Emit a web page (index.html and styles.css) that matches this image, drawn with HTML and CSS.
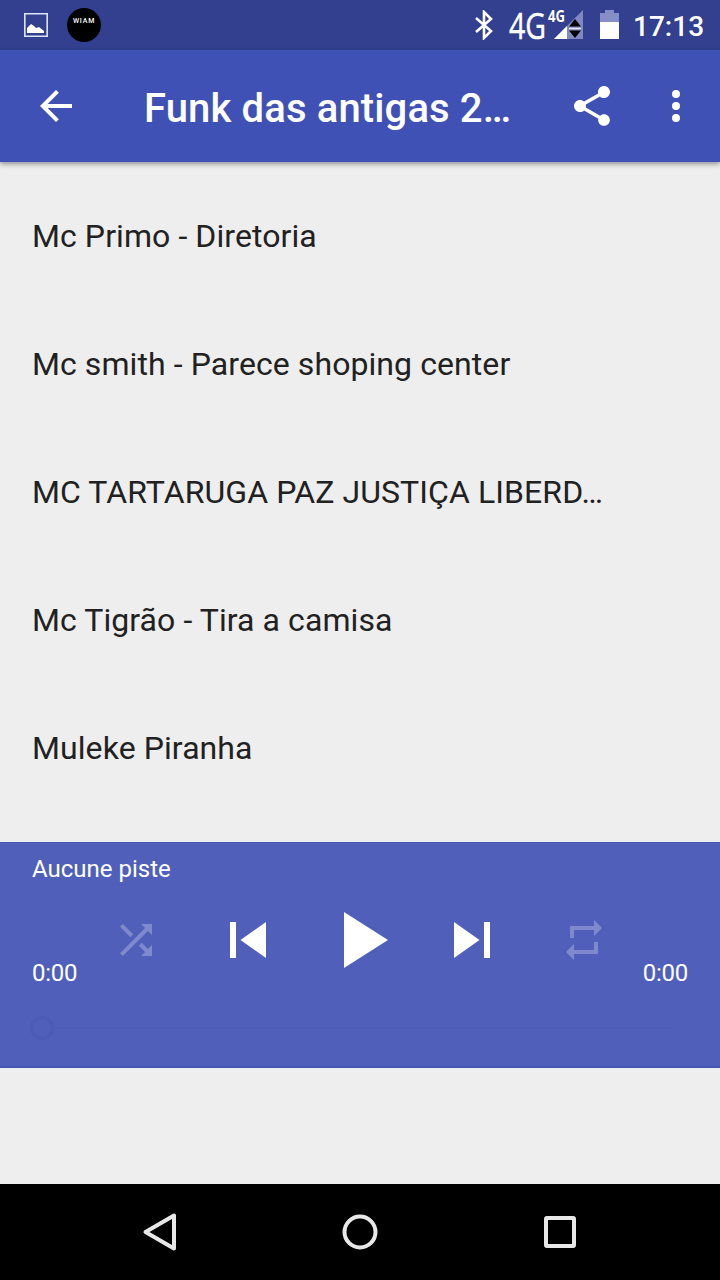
FILE: index.html
```html
<!DOCTYPE html>
<html lang="fr">
<head>
<meta charset="utf-8">
<title>Funk das antigas</title>
<link rel="stylesheet" href="styles.css">
</head>
<body>
<div class="screen">
  <div class="status">
    <svg class="photo" width="24" height="24" viewBox="0 0 24 24"><path d="M.8.8h22.4v22.4H.8z" fill="none" stroke="#dfe3fa" stroke-width="1.6"/><path d="M3 20v-5l4-4 3 2 2 2 3-1 5 4v2z" fill="#fff"/></svg>
    <div class="badge"><span>WIAM</span></div>
    <svg class="bluetooth" width="20" height="30" viewBox="0 0 20 30"><path d="M2 8l15 13-7 7V2l7 7L2 22" fill="none" stroke="#fff" stroke-width="2.6"/></svg>
    <svg class="signal" width="78" height="50" viewBox="0 0 78 50">
      <path d="M75 10v29H46z" fill="#7f88c2"/><path d="M59 26v13H46z" fill="#fff"/>
      <path d="M67 19l6 7.5H61zM67 38l6-7.5H61z" fill="#000"/><path d="M61 28.5h12" stroke="#e4e7f6" stroke-width="1.6"/>
      <text class="net-large" x="1" y="39" textLength="37" lengthAdjust="spacingAndGlyphs">4G</text>
      <text class="net-small" x="40" y="22" textLength="17" lengthAdjust="spacingAndGlyphs">4G</text>
    </svg>
    <svg class="battery" width="19" height="30" viewBox="0 0 19 30"><path d="M0 3h5V0h9v3h5v9H0z" fill="#858ec6"/><path d="M0 12h19v17H0z" fill="#fff"/></svg>
    <span class="clock">17:13</span>
  </div>
  <header class="toolbar">
    <svg width="48" height="48" viewBox="0 0 24 24"><path d="M20 11H7.83l5.59-5.59L12 4l-8 8 8 8 1.41-1.41L7.83 13H20z"/></svg>
    <h1>Funk das antigas 2…</h1>
    <svg width="48" height="48" viewBox="0 0 24 24"><path d="M18 16.08c-.76 0-1.44.3-1.96.77L8.91 12.7c.05-.23.09-.46.09-.7s-.04-.47-.09-.7l7.05-4.11c.54.5 1.25.81 2.04.81 1.66 0 3-1.34 3-3s-1.34-3-3-3-3 1.34-3 3c0 .24.04.47.09.7L8.04 9.81C7.5 9.31 6.79 9 6 9c-1.66 0-3 1.34-3 3s1.34 3 3 3c.79 0 1.5-.31 2.04-.81l7.12 4.16c-.05.21-.08.43-.08.65 0 1.61 1.31 2.92 2.92 2.92s2.92-1.31 2.92-2.92-1.31-2.92-2.92-2.92z"/></svg>
    <svg class="more" width="48" height="48" viewBox="0 0 24 24"><circle cx="12" cy="6" r="2"/><circle cx="12" cy="12" r="2"/><circle cx="12" cy="18" r="2"/></svg>
  </header>
  <ul class="tracks">
    <li>Mc Primo - Diretoria</li>
    <li>Mc smith - Parece shoping center</li>
    <li>MC TARTARUGA PAZ JUSTIÇA LIBERD…</li>
    <li>Mc Tigrão - Tira a camisa</li>
    <li>Muleke Piranha</li>
  </ul>
  <section class="player">
    <div class="now">Aucune piste</div>
    <div class="controls">
      <span class="time">0:00</span>
      <div class="buttons">
        <svg class="off" width="48" height="48" viewBox="0 0 24 24"><path d="M10.59 9.17L5.41 4 4 5.41l5.17 5.17 1.42-1.41zM14.5 4l2.04 2.04L4 18.59 5.41 20 17.96 7.46 20 9.5V4h-5.5zm.33 9.41l-1.41 1.41 3.13 3.13L14.5 20H20v-5.5l-2.04 2.04-3.13-3.13z"/></svg>
        <svg width="72" height="72" viewBox="0 0 24 24"><path d="M6 6h2v12H6zm3.5 6l8.5 6V6z"/></svg>
        <svg width="96" height="96" viewBox="0 0 24 24"><path d="M8 5v14l11-7z"/></svg>
        <svg width="72" height="72" viewBox="0 0 24 24"><path d="M6 18l8.5-6L6 6v12zM16 6v12h2V6h-2z"/></svg>
        <svg class="off" width="48" height="48" viewBox="0 0 24 24"><path d="M7 7h10v3l4-4-4-4v3H5v6h2V7zm10 10H7v-3l-4 4 4 4v-3h12v-6h-2v4z"/></svg>
      </div>
      <span class="time end">0:00</span>
    </div>
    <div class="seek"><span class="thumb"></span><span class="rail"></span></div>
  </section>
  <nav class="navbar">
    <svg width="40" height="40" viewBox="0 0 40 40"><path d="M5.5 20L34 3.5v33z"/></svg>
    <svg width="40" height="40" viewBox="0 0 40 40"><circle cx="20" cy="20" r="15.5"/></svg>
    <svg width="40" height="40" viewBox="0 0 40 40"><rect x="6" y="6" width="28" height="28" rx="1"/></svg>
  </nav>
</div>
</body>
</html>
```
FILE: styles.css
```css
* { box-sizing: border-box; }
body { margin: 0; font-family: Roboto, sans-serif; }
svg { display: block; flex: none; }
.screen { width: 720px; height: 1280px; display: flex; flex-direction: column; background: #eee; overflow: hidden; }

.status { height: 50px; flex: none; display: flex; align-items: center; padding: 0 17px 0 24px; background: #32408f; color: #fff; }
.badge { width: 34px; height: 34px; margin-left: 19px; border-radius: 50%; background: #000; display: flex; justify-content: center; padding-top: 7px; }
.badge span { font-size: 7px; line-height: 12px; font-weight: 500; letter-spacing: 0.8px; }
.bluetooth { margin-left: auto; }
.signal { margin-left: 14px; }
.net-large { font: 37px "Open Sans", sans-serif; fill: #fff; stroke: #fff; stroke-width: .5; }
.net-small { font: 700 16px "Open Sans", sans-serif; fill: #fff; }
.battery { margin-left: 14px; }
.clock { width: 70px; margin-left: 14px; font-size: 28px; line-height: 46px; font-weight: 500; padding-top: 3px; white-space: nowrap; }

.toolbar { height: 112px; flex: none; display: flex; align-items: center; padding: 0 20px 0 32px; background: #3f51b5; box-shadow: 0 2px 5px rgba(0, 0, 0, .4); position: relative; }
.toolbar svg { fill: #fff; }
.toolbar h1 { flex: 1; margin: 0; padding: 6px 0 0 64px; font-size: 40px; line-height: 48px; font-weight: 500; letter-spacing: .13px; color: #fff; white-space: nowrap; }
.more { margin-left: 36px; }

.tracks { height: 680px; flex: none; margin: 0; padding: 10px 0 0; list-style: none; overflow: hidden; }
.tracks li { height: 128px; padding-left: 32px; font-size: 32px; line-height: 128px; letter-spacing: .08px; color: #212121; white-space: nowrap; }

.player { height: 226px; flex: none; background: #5060ba; border-top: 1px solid #4655b3; border-bottom: 2px solid #4655b3; color: #fff; font-size: 24px; line-height: 28px; }
.now { height: 49px; padding: 12px 32px 0; }
.controls { height: 96px; display: flex; padding: 0 32px; }
.time { width: 48px; padding-top: 67px; letter-spacing: -.25px; }
.end { text-align: right; }
.buttons { flex: 1; display: grid; grid-template-columns: repeat(5, 112px); justify-content: center; align-items: center; justify-items: center; }
.buttons svg { fill: #fff; }
.buttons .off { fill: #7e8acc; }
.seek { height: 80px; display: flex; align-items: center; padding: 0 48px 0 30px; }
.thumb { width: 24px; height: 24px; border: 3px solid #4b5bb6; border-radius: 50%; }
.rail { flex: 1; height: 2px; background: #4e5eb8; }

.navbar { height: 96px; flex: none; margin-top: auto; display: grid; grid-template-columns: repeat(3, 200px); justify-content: center; justify-items: center; align-items: center; background: #000; }
.navbar svg { fill: none; stroke: #e8e8e8; stroke-width: 4; stroke-linejoin: round; }
```
